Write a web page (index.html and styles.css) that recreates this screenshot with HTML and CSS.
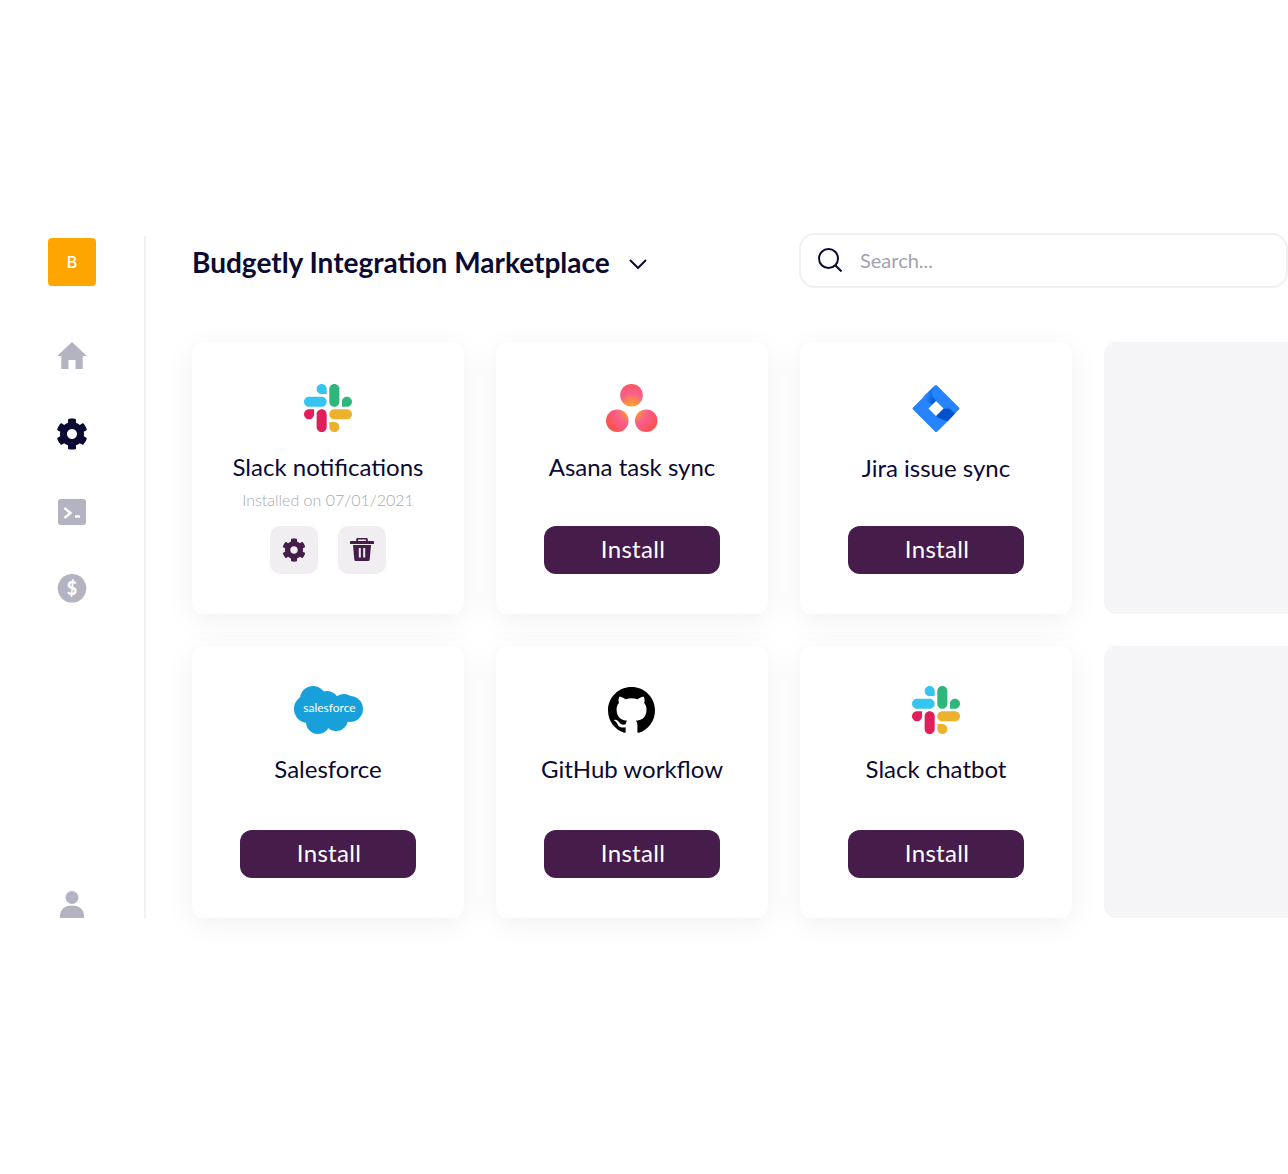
FILE: index.html
```html
<!DOCTYPE html>
<html lang="en">
<head>
  <meta charset="UTF-8" />
  <meta name="viewport" content="width=device-width, initial-scale=1.0"/>
  <title>Budgetly Integration Marketplace</title>
  <link rel="stylesheet" href="styles.css">
</head>
<body>
  <svg class="defs" width="0" height="0">
    <defs>
      <symbol id="slack" viewBox="0 0 122.8 122.8">
        <path d="M25.8 77.6c0 7.1-5.8 12.9-12.9 12.9S0 84.7 0 77.6s5.8-12.9 12.9-12.9h12.9v12.9z" fill="#e01e5a"/>
        <path d="M32.3 77.6c0-7.1 5.8-12.9 12.9-12.9s12.9 5.8 12.9 12.9v32.3c0 7.1-5.8 12.9-12.9 12.9s-12.9-5.8-12.9-12.9V77.6z" fill="#e01e5a"/>
        <path d="M45.2 25.8c-7.1 0-12.9-5.8-12.9-12.9S38.1 0 45.2 0s12.9 5.8 12.9 12.9v12.9H45.2z" fill="#36c5f0"/>
        <path d="M45.2 32.3c7.1 0 12.9 5.8 12.9 12.9s-5.8 12.9-12.9 12.9H12.9C5.8 58.1 0 52.3 0 45.2s5.8-12.9 12.9-12.9h32.3z" fill="#36c5f0"/>
        <path d="M97 45.2c0-7.1 5.8-12.9 12.9-12.9s12.9 5.8 12.9 12.9-5.8 12.9-12.9 12.9H97V45.2z" fill="#2eb67d"/>
        <path d="M90.5 45.2c0 7.1-5.8 12.9-12.9 12.9s-12.9-5.8-12.9-12.9V12.9C64.7 5.8 70.5 0 77.6 0s12.9 5.8 12.9 12.9v32.3z" fill="#2eb67d"/>
        <path d="M77.6 97c7.1 0 12.9 5.8 12.9 12.9s-5.8 12.9-12.9 12.9-12.9-5.8-12.9-12.9V97h12.9z" fill="#ecb22e"/>
        <path d="M77.6 90.5c-7.1 0-12.9-5.8-12.9-12.9s5.8-12.9 12.9-12.9h32.3c7.1 0 12.9 5.8 12.9 12.9s-5.8 12.9-12.9 12.9H77.6z" fill="#ecb22e"/>
      </symbol>
      <symbol id="cog" viewBox="0 0 512 512">
        <path fill="currentColor" d="M487.4 315.7l-42.6-24.6c4.3-23.2 4.3-47 0-70.2l42.6-24.6c4.9-2.8 7.1-8.6 5.5-14-11.1-35.6-30-67.8-54.7-94.6-3.8-4.1-10-5.1-14.8-2.3L380.8 110c-17.9-15.4-38.5-27.3-60.8-35.1V25.8c0-5.6-3.9-10.5-9.4-11.7-36.7-8.2-74.3-7.8-109.2 0-5.5 1.2-9.4 6.1-9.4 11.7V75c-22.2 7.9-42.8 19.8-60.8 35.1L88.7 85.5c-4.9-2.8-11-1.9-14.8 2.3-24.7 26.7-43.6 58.9-54.7 94.6-1.7 5.4.6 11.2 5.5 14L67.3 221c-4.3 23.2-4.3 47 0 70.2l-42.6 24.6c-4.9 2.8-7.1 8.6-5.5 14 11.1 35.6 30 67.8 54.7 94.6 3.8 4.1 10 5.1 14.8 2.3l42.6-24.6c17.9 15.4 38.5 27.3 60.8 35.1v49.2c0 5.6 3.9 10.5 9.4 11.7 36.7 8.2 74.3 7.8 109.2 0 5.5-1.2 9.4-6.1 9.4-11.7v-49.2c22.2-7.9 42.8-19.8 60.8-35.1l42.6 24.6c4.9 2.8 11 1.9 14.8-2.3 24.7-26.7 43.6-58.9 54.7-94.6 1.5-5.5-.7-11.3-5.6-14.1zM256 336c-44.1 0-80-35.9-80-80s35.9-80 80-80 80 35.9 80 80-35.9 80-80 80z"/>
      </symbol>
    </defs>
  </svg>

  <div class="app">
    <aside class="sidebar">
      <div class="brand">B</div>
      <nav class="nav">
        <svg class="nav-icon" viewBox="0 0 32 32"><path fill="#b3b3c1" d="M16 2 30 15.200c.4.4.2.8-.3.8H26.700v12.200c0 .5-.3.800-.8.800H19.500V20h-7v9H6.100c-.5 0-.8-.3-.8-.8V16H2.300c-.5 0-.7-.4-.3-.8z"/></svg>
        <svg class="nav-icon nav-active"><use href="#cog"/></svg>
        <svg class="nav-icon" viewBox="0 0 32 32"><rect x="2" y="3" width="28" height="26" rx="3" fill="#b3b3c1"/><path d="M8.500 12 14.500 17 8.500 22" fill="none" stroke="#fff" stroke-width="2.400"/><path d="M19 20.500h5" stroke="#fff" stroke-width="2.400"/></svg>
        <svg class="nav-icon" viewBox="0 0 32 32"><circle cx="16" cy="14.300" r="14.300" fill="#b3b3c1"/><text class="dollar" x="16" y="20.700" text-anchor="middle">$</text></svg>
      </nav>
      <svg class="user-icon" viewBox="0 0 24 27"><circle cx="12" cy="6.500" r="6.500" fill="#b3b3c1"/><path fill="#b3b3c1" d="M0 27v-2c0-6.500 5-10.500 12-10.500S24 18.500 24 25v2z"/></svg>
    </aside>

    <main class="main">
      <header class="topbar">
        <div class="title-wrap">
          <h1>Budgetly Integration Marketplace</h1>
          <svg class="chevron" viewBox="0 0 18 10"><path d="M1 1l8 8 8-8" fill="none" stroke="#0a0a33" stroke-width="2"/></svg>
        </div>
        <label class="search">
          <svg class="search-icon" viewBox="0 0 24 24"><circle cx="10.500" cy="10.500" r="9.500" fill="none" stroke="#0a0a33" stroke-width="2"/><path d="M17.500 17.500l6 6" stroke="#0a0a33" stroke-width="2"/></svg>
          <input type="text" placeholder="Search...">
        </label>
      </header>

      <section class="grid">
        <div class="card">
          <svg class="logo"><use href="#slack"/></svg>
          <div class="name">Slack notifications</div>
          <div class="meta">Installed on 07/01/2021</div>
          <div class="actions">
            <button class="icon-btn"><svg class="btn-icon"><use href="#cog"/></svg></button>
            <button class="icon-btn">
              <svg class="btn-icon" viewBox="0 0 24 24"><path fill="currentColor" d="M7.500 0h9c.7 0 1.300.6 1.300 1.300V3H23c.6 0 1 .4 1 1v2H0V4c0-.6.4-1 1-1h5.200V1.300C6.200.6 6.800 0 7.500 0zm.6 1.500V3h7.800V1.500zM3 7h18l-1.300 14.500c-.1 1-.9 1.500-1.800 1.500H6.100c-.9 0-1.700-.5-1.800-1.500zM8.800 10v9.500h2V10zm4.400 0v9.500h2V10z"/></svg>
            </button>
          </div>
        </div>

        <div class="card">
          <svg class="logo logo-asana" viewBox="0 0 52 48">
            <defs>
              <radialGradient id="asanaFill" gradientUnits="userSpaceOnUse" cx="26" cy="25" r="27">
                <stop offset="0" stop-color="#ffb900"/>
                <stop offset="0.6" stop-color="#f95d8f"/>
                <stop offset="1" stop-color="#f95353"/>
              </radialGradient>
            </defs>
            <circle cx="25.500" cy="11.300" r="11.300" fill="url(#asanaFill)"/>
            <circle cx="11.300" cy="36.700" r="11.300" fill="url(#asanaFill)"/>
            <circle cx="40.200" cy="36.700" r="11.300" fill="url(#asanaFill)"/>
          </svg>
          <div class="name">Asana task sync</div>
          <button class="install">Install</button>
        </div>

        <div class="card">
          <svg class="logo logo-jira" viewBox="0 0 48 49">
            <defs>
              <linearGradient id="jiraTop" x1="1" y1="0.7" x2="0.3" y2="0.3">
                <stop offset="0" stop-color="#0052cc"/>
                <stop offset="1" stop-color="#2684ff"/>
              </linearGradient>
            </defs>
            <path fill="#2684ff" d="M23 1.500a1.400 1.400 0 0 1 2 0l22 22a1.400 1.400 0 0 1 0 2l-22 22a1.400 1.400 0 0 1-2 0l-22-22a1.400 1.400 0 0 1 0-2z"/>
            <path fill="url(#jiraTop)" d="M24 17c-5-5-5-10.500-.8-16L11 13l13 11.500z"/>
            <path fill="#0052cc" d="M31.500 24.500 24 32c2 2 6 4 11.500 5.500l7.500-8-5.500-5z"/>
            <path fill="#2684ff" d="M24 32c5 5 5 10.500.8 16L35.500 37.500C31 36 27 35 24 32z"/>
            <path fill="#fff" d="M24 17l7.500 7.500L24 32l-7.500-7.500z"/>
          </svg>
          <div class="name name-jira">Jira issue sync</div>
          <button class="install">Install</button>
        </div>

        <div class="card-blank"></div>

        <div class="card">
          <svg class="logo logo-sf" viewBox="0 0 69 48">
            <g fill="#18a0db">
              <circle cx="14" cy="23" r="14"/>
              <circle cx="19" cy="13" r="13"/>
              <circle cx="33" cy="17" r="12"/>
              <circle cx="50" cy="20" r="12"/>
              <circle cx="56" cy="23" r="13"/>
              <circle cx="24" cy="36" r="12"/>
              <circle cx="42" cy="33" r="12"/>
            </g>
            <text class="sf-text" x="35.500" y="26" text-anchor="middle">salesforce</text>
          </svg>
          <div class="name">Salesforce</div>
          <button class="install">Install</button>
        </div>

        <div class="card">
          <svg class="logo logo-gh" viewBox="0 0 16 16"><path fill="#000" d="M8 0C3.580 0 0 3.580 0 8c0 3.540 2.290 6.530 5.470 7.590.4.070.55-.17.55-.38 0-.19-.01-.82-.01-1.490-2.010.37-2.530-.49-2.690-.94-.09-.23-.48-.94-.82-1.130-.28-.15-.68-.52-.01-.53.63-.01 1.080.58 1.230.82.72 1.210 1.870.87 2.330.66.070-.52.28-.87.51-1.070-1.780-.2-3.640-.89-3.640-3.950 0-.87.31-1.590.82-2.150-.08-.2-.36-1.020.08-2.120 0 0 .67-.21 2.200.82.64-.18 1.320-.27 2-.27.68 0 1.360.09 2 .27 1.530-1.040 2.200-.82 2.200-.82.44 1.100.16 1.920.08 2.120.51.56.82 1.270.82 2.150 0 3.070-1.870 3.750-3.650 3.950.29.25.54.73.54 1.480 0 1.070-.01 1.930-.01 2.200 0 .21.15.46.55.38A8.013 8.013 0 0016 8c0-4.420-3.580-8-8-8z"/></svg>
          <div class="name">GitHub workflow</div>
          <button class="install">Install</button>
        </div>

        <div class="card">
          <svg class="logo"><use href="#slack"/></svg>
          <div class="name">Slack chatbot</div>
          <button class="install">Install</button>
        </div>

        <div class="card-blank"></div>
      </section>
    </main>
  </div>
</body>
</html>
```

FILE: styles.css
```css
html, body {
  height: 100%;
}
body {
  margin: 0;
  background: #fff;
  color: #0a0a33;
  font-family: Lato, "Open Sans", sans-serif;
  overflow: hidden;
}
.defs {
  position: absolute;
}
.app {
  display: flex;
  padding-top: 233px;
  width: 1288px;
}

/* sidebar */
.sidebar {
  flex: none;
  width: 144px;
  height: 680px;
  margin-top: 3px;
  padding-top: 2px;
  border-right: 2px solid #f2f2f5;
  display: flex;
  flex-direction: column;
  align-items: center;
}
.brand {
  width: 48px;
  height: 48px;
  border-radius: 4px;
  background: #ffa500;
  color: #fff;
  font-family: Inter, sans-serif;
  font-size: 16px;
  font-weight: 500;
  display: flex;
  align-items: center;
  justify-content: center;
}
.nav {
  display: flex;
  flex-direction: column;
  gap: 46px;
  margin-top: 54px;
}
.nav-icon {
  display: block;
  width: 32px;
  height: 32px;
}
.nav-active {
  color: #0a0a33;
}
.dollar {
  font-family: Lato, sans-serif;
  font-size: 18px;
  font-weight: 900;
  fill: #fff;
}
.user-icon {
  width: 24px;
  height: 27px;
  margin-top: auto;
}

/* main */
.main {
  flex: 1;
  min-width: 0;
  margin-left: 46px;
}
.topbar {
  display: flex;
  align-items: center;
  height: 55px;
  margin-bottom: 54px;
}
.title-wrap {
  flex: none;
  display: flex;
  align-items: center;
  width: 607px;
  padding-top: 2px;
}
h1 {
  margin: 0;
  font-size: 28px;
  font-weight: 700;
}
.chevron {
  width: 18px;
  height: 10px;
  margin-left: 19px;
  margin-top: 5px;
}
.search {
  flex: 1;
  height: 55px;
  box-sizing: border-box;
  border: 2px solid #f0f0f3;
  border-radius: 16px;
  display: flex;
  align-items: center;
  padding-left: 17px;
  padding-bottom: 2px;
  gap: 18px;
}
.search-icon {
  flex: none;
  width: 24px;
  height: 24px;
}
.search input {
  border: none;
  outline: none;
  flex: 1;
  min-width: 0;
  padding: 0;
  font-family: Lato, sans-serif;
  font-size: 20px;
  color: #0a0a33;
}
.search input::placeholder {
  color: #a3a2b4;
}

/* cards */
.grid {
  display: grid;
  grid-template-columns: repeat(3, 272px) 1fr;
  grid-auto-rows: 272px;
  gap: 32px;
}
.card {
  background: #fff;
  border-radius: 12px;
  box-shadow: 0 6px 32px rgba(0, 0, 0, 0.06);
  box-sizing: border-box;
  padding: 40px 0;
  display: flex;
  flex-direction: column;
  align-items: center;
}
.card:nth-child(-n+3) {
  padding-top: 42px;
}
.card-blank {
  background: #f5f5f7;
  border-radius: 12px 0 0 12px;
}
.logo {
  display: block;
  flex: none;
  width: 48px;
  height: 48px;
}
.logo-asana {
  width: 52px;
}
.logo-jira {
  height: 49px;
}
.logo-sf {
  width: 69px;
}
.logo-gh {
  margin: 1px 1px 0 0;
  width: 47px;
  height: 47px;
}
.sf-text {
  font-family: Lato, sans-serif;
  font-size: 12px;
  fill: #fff;
}
.name {
  margin-top: 19px;
  font-size: 24px;
  line-height: 32px;
}
.meta {
  margin-top: 5px;
  font-size: 16px;
  font-weight: 300;
  line-height: 24px;
  color: #aaa;
}
.actions {
  margin-top: auto;
  display: flex;
  gap: 20px;
}
.icon-btn {
  width: 48px;
  height: 48px;
  padding: 0;
  border: none;
  border-radius: 10px;
  background: #f0eef1;
  color: #451c4a;
  display: flex;
  align-items: center;
  justify-content: center;
}
.btn-icon {
  width: 24px;
  height: 24px;
}
.install {
  margin-top: auto;
  width: 176px;
  height: 48px;
  padding: 0 0 4px 2px;
  border: none;
  border-radius: 12px;
  background: #451c4a;
  color: #fff;
  font-family: Lato, sans-serif;
  font-size: 24px;
  letter-spacing: 0.3px;
}
```
